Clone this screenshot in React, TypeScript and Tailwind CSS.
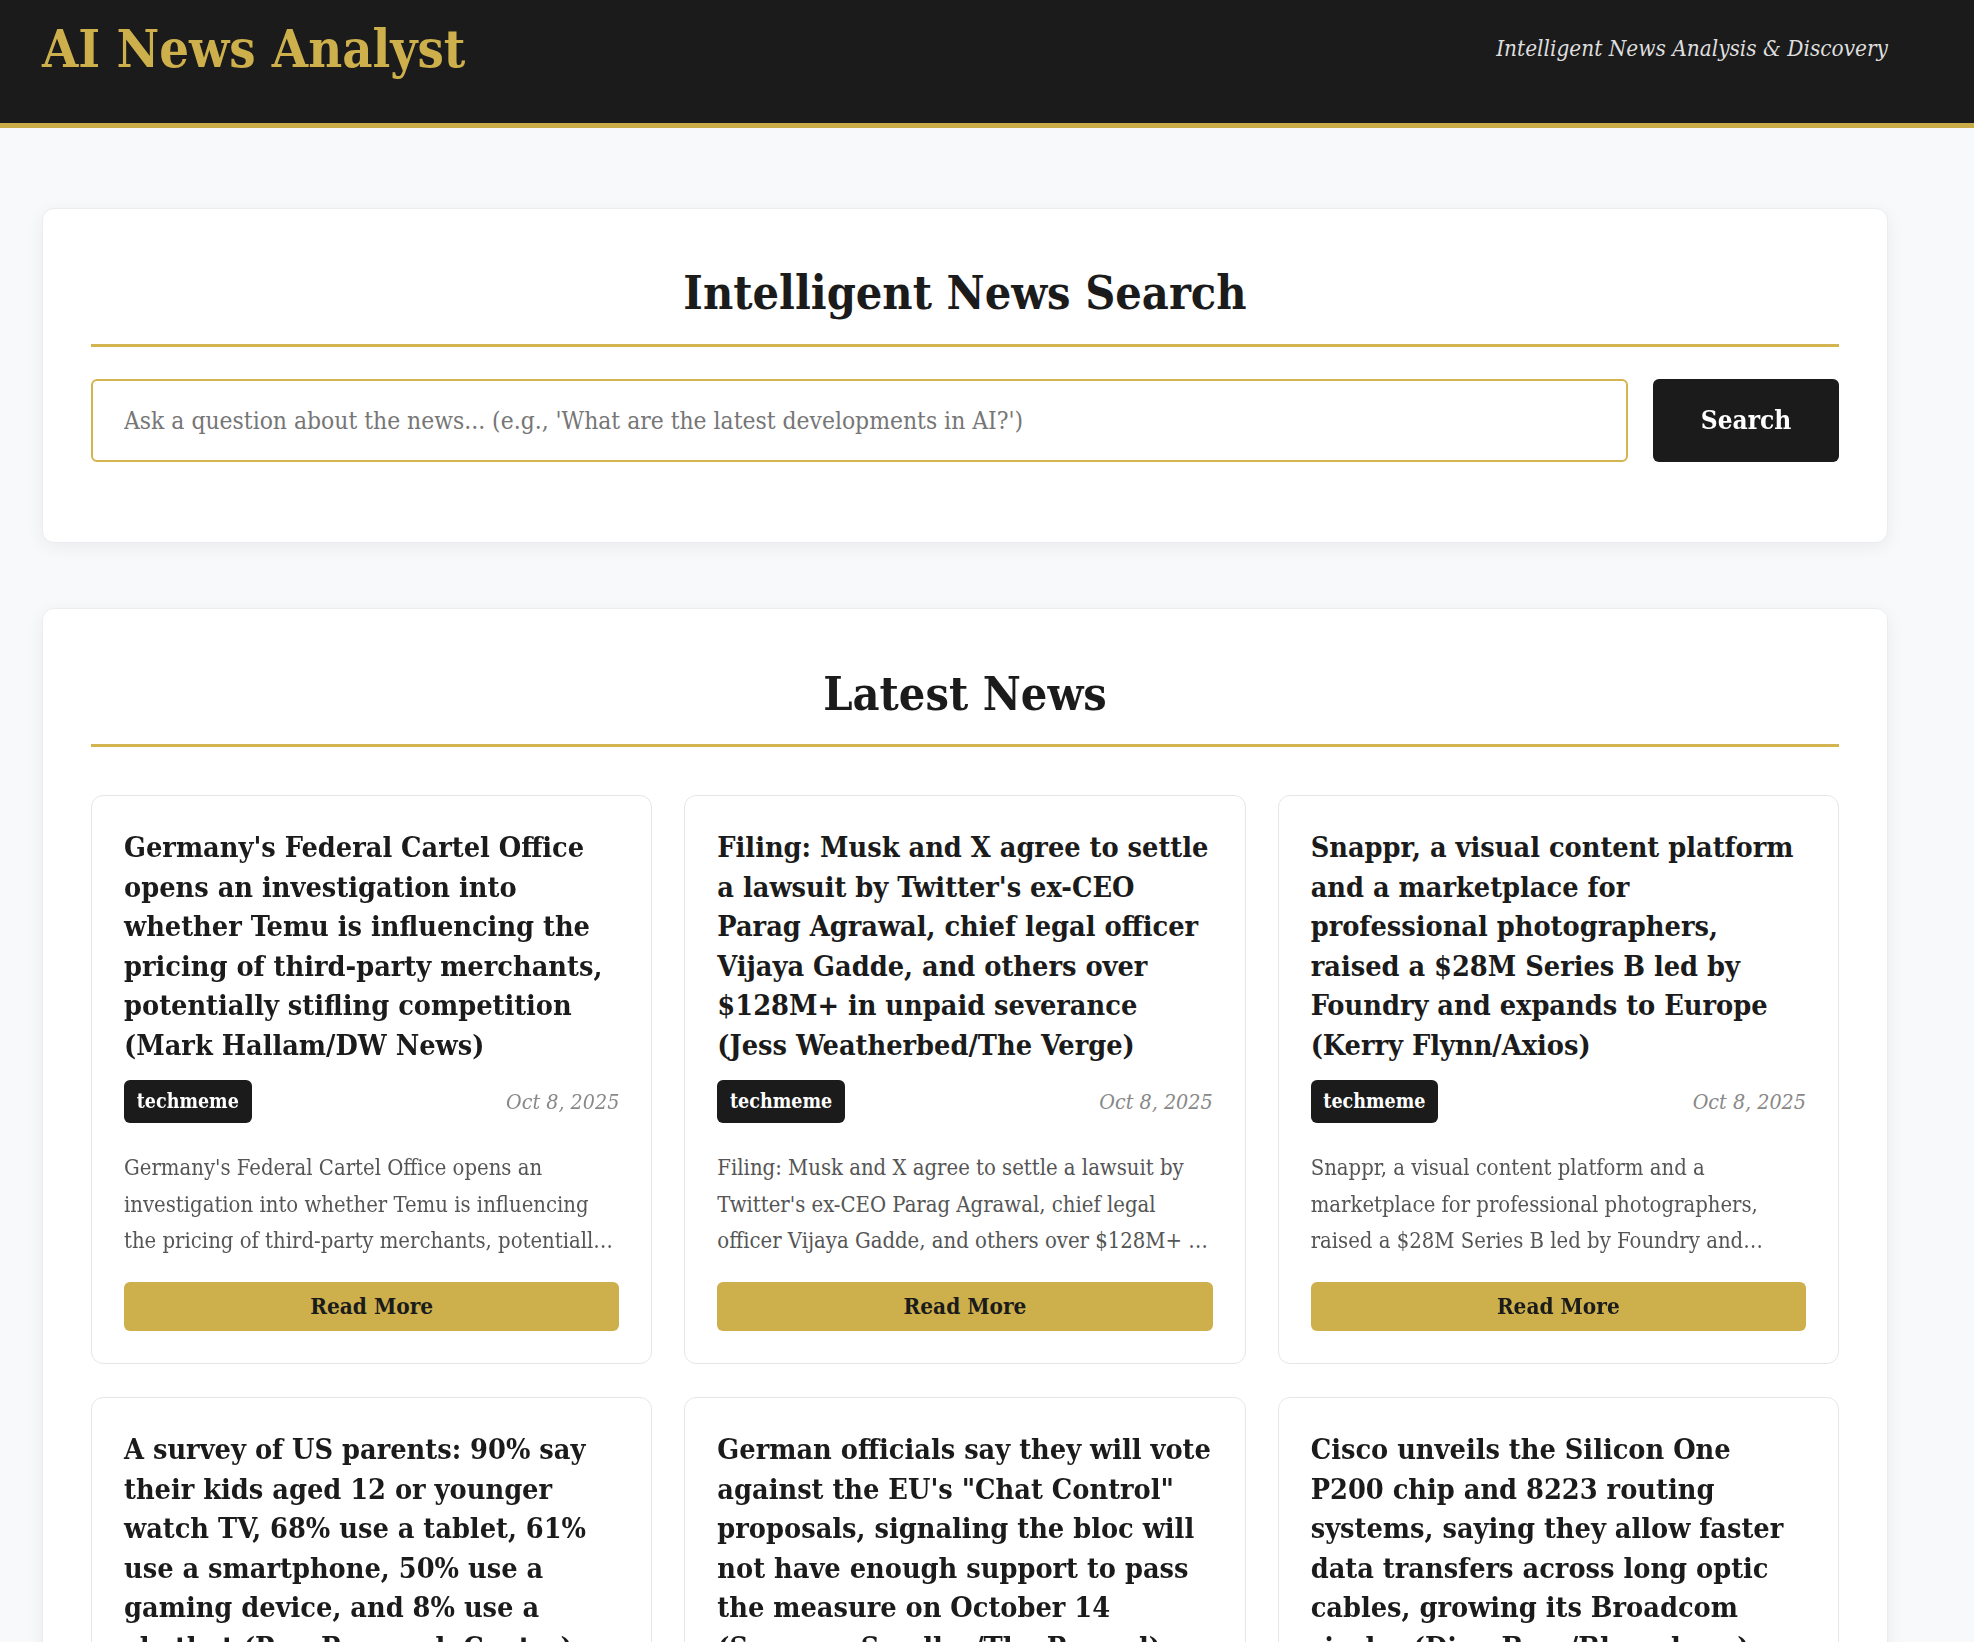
import React from "react";

type Item = { title: string; source: string; date: string };

const news: Item[] = [
  {
    title:
      "Germany's Federal Cartel Office opens an investigation into whether Temu is influencing the pricing of third-party merchants, potentially stifling competition (Mark Hallam/DW News)",
    source: "techmeme",
    date: "Oct 8, 2025",
  },
  {
    title:
      "Filing: Musk and X agree to settle a lawsuit by Twitter's ex-CEO Parag Agrawal, chief legal officer Vijaya Gadde, and others over $128M+ in unpaid severance (Jess Weatherbed/The Verge)",
    source: "techmeme",
    date: "Oct 8, 2025",
  },
  {
    title:
      "Snappr, a visual content platform and a marketplace for professional photographers, raised a $28M Series B led by Foundry and expands to Europe (Kerry Flynn/Axios)",
    source: "techmeme",
    date: "Oct 8, 2025",
  },
  {
    title:
      "A survey of US parents: 90% say their kids aged 12 or younger watch TV, 68% use a tablet, 61% use a smartphone, 50% use a gaming device, and 8% use a chatbot (Pew Research Center)",
    source: "techmeme",
    date: "Oct 8, 2025",
  },
  {
    title:
      "German officials say they will vote against the EU's \"Chat Control\" proposals, signaling the bloc will not have enough support to pass the measure on October 14 (Suzanne Smalley/The Record)",
    source: "techmeme",
    date: "Oct 8, 2025",
  },
  {
    title:
      "Cisco unveils the Silicon One P200 chip and 8223 routing systems, saying they allow faster data transfers across long optic cables, growing its Broadcom rivalry (Dina Bass/Bloomberg)",
    source: "techmeme",
    date: "Oct 8, 2025",
  },
];

function NewsCard({ item }: { item: Item }) {
  return (
    <article className="bg-white border border-[#e6e6e6] rounded-[12px] p-[32px] flex flex-col">
      <h3 className="text-[28.6px] font-bold leading-[39.5px] text-[#1b1b1b]">{item.title}</h3>
      <div className="mt-[15px] flex items-center justify-between">
        <span className="bg-[#1b1b1b] text-white font-bold text-[19.5px] h-[43px] px-[12.7px] rounded-[6px] flex items-center">
          {item.source}
        </span>
        <span className="italic text-[21.3px] text-[#888888]">{item.date}</span>
      </div>
      <div className="mt-[27px] flex-1">
        <p className="text-[21.9px] leading-[36.5px] text-[#555555] line-clamp-3">{item.title}</p>
      </div>
      <button className="mt-[22.5px] h-[49px] w-full rounded-[6px] bg-[#cdb04c] font-bold text-[22.4px] text-[#1b1b1b]">
        Read More
      </button>
    </article>
  );
}

export default function App() {
  return (
    <div className="min-h-screen bg-[#f8f9fa] text-[#1b1b1b] [font-family:'DejaVu_Serif_Condensed','DejaVu_Serif',serif]">
      <header className="h-[128px] bg-[#1b1b1b] border-b-[5px] border-[#c9ab48]">
        <div className="ml-[42px] w-[1846px] h-[98px] flex items-center justify-between">
          <h1 className="text-[52px] font-bold text-[#cdb04c] leading-none">AI News Analyst</h1>
          <p className="italic text-[22.4px] text-[#dedede]">Intelligent News Analysis &amp; Discovery</p>
        </div>
      </header>

      <main className="ml-[42px] w-[1846px] pt-[80px] pb-[80px] flex flex-col gap-[65px]">
        <section className="bg-white rounded-[12px] border border-[#eaecef] shadow-[0_4px_18px_rgba(0,0,0,0.06)] p-[48px]">
          <h2 className="text-center text-[46.4px] font-bold leading-[63px] pt-[4px] pb-[20px] border-b-[3px] border-[#d2b451]">
            Intelligent News Search
          </h2>
          <div className="mt-[32px] mb-[32px] flex gap-[25px]">
            <input
              autoFocus
              type="text"
              placeholder="Ask a question about the news... (e.g., 'What are the latest developments in AI?')"
              className="flex-1 h-[83px] border-[2.5px] border-[#d4b44f] rounded-[6px] px-[31px] text-[24.4px] text-[#1b1b1b] placeholder:text-[#767676] outline-none focus:outline-none bg-white caret-[#1b1b1b]"
            />
            <button className="w-[186px] h-[83px] bg-[#1b1b1b] text-white font-bold text-[26px] rounded-[6px]">
              Search
            </button>
          </div>
        </section>

        <section className="bg-white rounded-[12px] border border-[#eaecef] shadow-[0_4px_18px_rgba(0,0,0,0.06)] p-[48px]">
          <h2 className="text-center text-[46.4px] font-bold leading-[63px] pt-[5px] pb-[19px] border-b-[3px] border-[#d2b451]">
            Latest News
          </h2>
          <div className="mt-[48px] grid grid-cols-3 gap-x-[32px] gap-y-[33px]">
            {news.map((n, i) => (
              <NewsCard key={i} item={n} />
            ))}
          </div>
        </section>
      </main>
    </div>
  );
}
